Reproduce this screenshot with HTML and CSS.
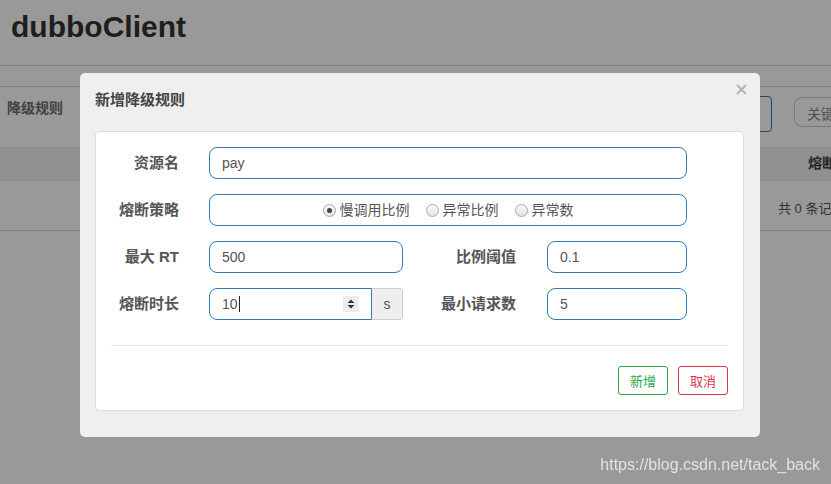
FILE: index.html
```html
<!DOCTYPE html>
<html lang="zh-CN">
<head>
<meta charset="utf-8">
<title>dubboClient</title>
<link rel="stylesheet" href="styles.css">
</head>
<body>
<div class="page">
  <header class="app-header"><h1 class="app-title">dubboClient</h1></header>
  <div class="subnav"></div>
  <div class="toolbar">
    <span class="crumb">降级规则</span>
    <button class="btn-outline-blue">新增降级规则</button>
    <span class="gap"></span>
    <div class="search">关键字</div>
  </div>
  <div class="table">
    <div class="thead"><span class="th">熔断时长</span></div>
    <div class="trow"><span class="total">共 0 条记录</span></div>
  </div>
</div>

<div class="backdrop"></div>

<div class="modal">
  <div class="modal-header">
    <h4 class="modal-title">新增降级规则</h4>
    <button class="close" aria-label="close">
      <svg width="11" height="11" viewBox="0 0 11 11"><path d="M1 1 L10 10 M10 1 L1 10" stroke="#b3b3b3" stroke-width="2" fill="none"/></svg>
    </button>
  </div>
  <div class="panel">
    <div class="form-grid">
      <label class="lbl">资源名</label>
      <div class="field span-3">pay</div>

      <label class="lbl">熔断策略</label>
      <div class="field span-3 radios">
        <span class="radio-item"><span class="radio checked"></span>慢调用比例</span>
        <span class="radio-item"><span class="radio"></span>异常比例</span>
        <span class="radio-item"><span class="radio"></span>异常数</span>
      </div>

      <label class="lbl">最大 RT</label>
      <div class="field">500</div>
      <label class="lbl lbl-right">比例阈值</label>
      <div class="field">0.1</div>

      <label class="lbl">熔断时长</label>
      <div class="input-group">
        <div class="field field-left">10<span class="caret"></span>
          <span class="spinner">
            <svg width="16" height="16" viewBox="0 0 16 16"><path d="M4.5 7 L8 3.5 L11.5 7 Z M4.5 9 L8 12.5 L11.5 9 Z" fill="#333"/></svg>
          </span>
        </div>
        <span class="addon">s</span>
      </div>
      <label class="lbl lbl-right">最小请求数</label>
      <div class="field">5</div>
    </div>
    <hr class="divider">
    <div class="actions">
      <button class="btn btn-green">新增</button>
      <button class="btn btn-red">取消</button>
    </div>
  </div>
</div>

<div class="watermark">https://blog.csdn.net/tack_back</div>
</body>
</html>
```
FILE: styles.css
```css
html, body {
  margin: 0;
  padding: 0;
  height: 100%;
  overflow: hidden;
  background: #fff;
  font-family: "Liberation Sans", "Noto Sans CJK SC", sans-serif;
}

.page {
  width: 100%;
}

.app-header {
  height: 66px;
  border-bottom: 1px solid #d8d8d8;
  padding-left: 11px;
  box-sizing: border-box;
}

.app-title {
  margin: 0;
  padding-top: 10px;
  font-size: 30px;
  line-height: 34px;
  font-weight: bold;
  color: #333;
}

.subnav {
  height: 20px;
  border-bottom: 1px solid #d8d8d8;
}

.toolbar {
  height: 60px;
  display: grid;
  grid-template-columns: 592px 180px 22px 160px;
  align-items: start;
  white-space: nowrap;
}

.crumb {
  padding-left: 7px;
  padding-top: 10px;
  font-size: 14px;
  font-weight: bold;
  color: #6e6e6e;
}

.btn-outline-blue {
  margin-top: 9px;
  height: 36px;
  border: 1px solid #337ab7;
  border-radius: 4px;
  background: #fff;
  font-size: 14px;
  color: #337ab7;
  font-family: inherit;
}

.search {
  margin-top: 10px;
  height: 30px;
  box-sizing: border-box;
  border: 1px solid #ccc;
  border-radius: 8px;
  padding: 5px 12px;
  font-size: 14px;
  color: #888;
}

.thead {
  height: 34px;
  background: #eff0f4;
  padding-left: 808px;
  white-space: nowrap;
  font-size: 14px;
  font-weight: bold;
  color: #444;
  line-height: 32px;
}

.trow {
  height: 49px;
  border-bottom: 1px solid #d5d5d5;
  padding-left: 778px;
  white-space: nowrap;
  font-size: 13px;
  color: #555;
  line-height: 56px;
}

.backdrop {
  position: fixed;
  inset: 0;
  background: rgba(0, 0, 0, 0.4);
}

.modal {
  position: fixed;
  left: 80px;
  top: 73px;
  width: 680px;
  height: 364px;
  box-sizing: border-box;
  background: #efefef;
  border-radius: 5px;
  padding: 0 16px 26px 15px;
}

.modal-header {
  display: flex;
  align-items: flex-start;
  height: 58px;
  box-sizing: border-box;
  padding-top: 17px;
}

.modal-title {
  margin: 0;
  font-size: 15px;
  line-height: 20px;
  font-weight: bold;
  color: #444;
}

.close {
  margin-left: auto;
  margin-top: -6px;
  margin-right: -3px;
  padding: 0;
  border: none;
  background: transparent;
  width: 11px;
  height: 11px;
  line-height: 0;
}

.panel {
  background: #fff;
  border: 1px solid #dcdcdc;
  border-radius: 4px;
  padding: 15px;
}

.form-grid {
  display: grid;
  grid-template-columns: 98px 194px 144px 140px;
  grid-auto-rows: 32px;
  row-gap: 15px;
}

.lbl {
  text-align: right;
  padding-right: 30px;
  font-size: 15px;
  font-weight: bold;
  color: #555;
  line-height: 32px;
  white-space: nowrap;
}

.lbl-right {
  padding-right: 31px;
}

.field {
  box-sizing: border-box;
  height: 32px;
  border: 1px solid #337ab7;
  border-radius: 8px;
  padding: 0 12px;
  font-size: 14px;
  color: #555;
  line-height: 30px;
  display: flex;
  align-items: center;
}

.span-3 {
  grid-column: 2 / 5;
}

.radios {
  justify-content: center;
  padding: 0;
  gap: 16px;
}

.radio-item {
  display: inline-flex;
  align-items: center;
  gap: 4px;
  font-size: 14px;
  color: #555;
}

.radio {
  width: 11px;
  height: 11px;
  border: 1px solid #a9a9a9;
  border-radius: 50%;
  background: linear-gradient(#fbfbfb, #e2e2e2);
  display: inline-flex;
  align-items: center;
  justify-content: center;
}

.radio.checked::after {
  content: "";
  width: 5px;
  height: 5px;
  border-radius: 50%;
  background: #444;
}

.input-group {
  display: flex;
}

.field-left {
  flex: 1;
  border-radius: 8px 0 0 8px;
}

.caret {
  display: inline-block;
  width: 1px;
  height: 16px;
  background: #222;
  margin-left: 1px;
}

.spinner {
  margin-left: auto;
  width: 16px;
  height: 16px;
  background: #ececec;
  line-height: 0;
}

.addon {
  width: 31px;
  box-sizing: border-box;
  border: 1px solid #ccc;
  border-left: none;
  border-radius: 0 4px 4px 0;
  background: #eee;
  font-size: 14px;
  color: #555;
  text-align: center;
  line-height: 30px;
}

.divider {
  margin: 25px 0 20px;
  border: none;
  border-top: 1px solid #e5e5e5;
  height: 0;
}

.actions {
  display: flex;
  justify-content: flex-end;
  gap: 10px;
}

.btn {
  width: 50px;
  height: 29px;
  background: #fff;
  border: 1px solid;
  border-radius: 3px;
  font-family: inherit;
  font-size: 13px;
  padding: 0;
}

.btn-green {
  border-color: #28a745;
  color: #28a745;
}

.btn-red {
  border-color: #dc3545;
  color: #dc3545;
}

.watermark {
  position: fixed;
  right: 11px;
  bottom: 10px;
  font-size: 16px;
  color: #e2e2e2;
  white-space: nowrap;
}
```
